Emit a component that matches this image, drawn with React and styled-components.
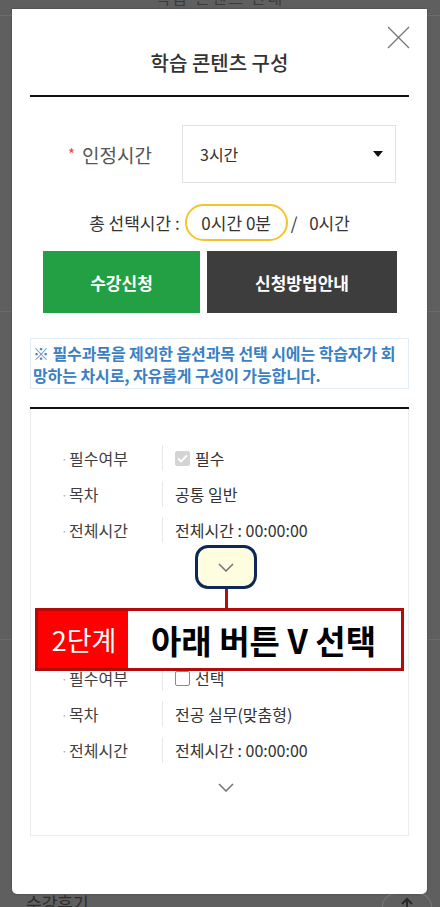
import React from "react";
import styled, { createGlobalStyle } from "styled-components";

const GlobalStyle = createGlobalStyle`
  html, body {
    margin: 0;
    padding: 0;
    background: #5f5f5f;
  }
  body {
    font-family: "Noto Sans CJK KR", "Noto Sans", sans-serif;
    color: #333;
  }
  * { box-sizing: border-box; }
`;

const Page = styled.div`
  position: relative;
  width: 440px;
  height: 907px;
  overflow: hidden;
  background: #5f5f5f;
  display: flex;
  flex-direction: column;
`;

const PageHeader = styled.div`
  height: 16px;
  border-bottom: 1px solid #6b6b6b;
  text-align: center;
  overflow: hidden;
`;

const PageHeaderText = styled.div`
  margin-top: -12px;
  font-size: 16px;
  line-height: 18px;
  color: #3a3a3a;
  letter-spacing: 2px;
`;

const PageBand = styled.div`
  height: ${(p) => p.h}px;
  border-bottom: 1px solid #6a6a6a;
`;

const PageFooter = styled.div`
  flex: 1;
  display: flex;
  align-items: flex-end;
  justify-content: space-between;
  padding: 0 8px 0 26px;
`;

const FooterText = styled.div`
  font-size: 17px;
  line-height: 16px;
  height: 12px;
  overflow: hidden;
  color: #2c2c2c;
`;

const TopButton = styled.div`
  width: 50px;
  height: 14px;
  border: 1px solid #777;
  border-bottom: none;
  border-radius: 25px 25px 0 0;
  display: flex;
  justify-content: center;
  padding-top: 3px;
  color: #2a2a2a;
`;

const Modal = styled.div`
  position: absolute;
  top: 9px;
  left: 12px;
  width: 415px;
  height: 885px;
  background: #fff;
  border-radius: 0 0 5px 5px;
  box-shadow: 0 0 2px rgba(0, 0, 0, 0.35);
  padding: 0 18px;
`;

const CloseButton = styled.button`
  position: absolute;
  top: 17px;
  right: 17px;
  width: 23px;
  height: 23px;
  padding: 0;
  border: none;
  background: none;
  color: #777;
  display: flex;
`;

const Header = styled.div`
  padding-top: 40px;
  padding-bottom: 18px;
  border-bottom: 2px solid #111;
  text-align: center;
`;

const Title = styled.h2`
  margin: 0;
  font-size: 20px;
  line-height: 28px;
  font-weight: 500;
  color: #333;
`;

const FieldRow = styled.div`
  margin-top: 28px;
  display: flex;
  align-items: center;
`;

const FieldLabel = styled.label`
  width: 122px;
  margin-right: 30px;
  text-align: right;
  font-size: 19px;
  color: #555;
`;

const Required = styled.span`
  color: #e0474c;
  font-size: 15px;
  margin-right: 7px;
  vertical-align: 3px;
`;

const Select = styled.div`
  width: 214px;
  height: 58px;
  border: 1px solid #e2e2e2;
  display: flex;
  align-items: center;
  justify-content: space-between;
  padding: 0 12px 0 17px;
  font-size: 16px;
  color: #333;
`;

const Caret = styled.span`
  width: 0;
  height: 0;
  border-left: 5.5px solid transparent;
  border-right: 5.5px solid transparent;
  border-top: 6px solid #111;
`;

const TotalRow = styled.div`
  margin-top: 21px;
  height: 37px;
  display: flex;
  align-items: center;
  justify-content: center;
  font-size: 17px;
  color: #333;
`;

const TimePill = styled.span`
  height: 37px;
  width: 103px;
  margin-left: 5px;
  border: 2px solid #f4c430;
  border-radius: 19px;
  display: inline-flex;
  align-items: center;
  justify-content: center;
`;

const Slash = styled.span`
  margin-left: 3px;
  word-spacing: 8px;
`;

const ButtonRow = styled.div`
  margin-top: 10px;
  padding: 0 12px 0 13px;
  display: flex;
  gap: 7px;
`;

const ActionButton = styled.button`
  width: ${(p) => p.w}px;
  height: 62px;
  border: none;
  background: ${(p) => p.bg};
  color: #fff;
  font-family: inherit;
  font-size: 17px;
  font-weight: 700;
`;

const Notice = styled.p`
  margin: 25px 0 0;
  padding: 3px 2px;
  height: 51px;
  border: 1px solid #e4edf5;
  color: #3b7fc4;
  font-size: 16px;
  font-weight: 700;
  line-height: 22px;
  white-space: nowrap;
  letter-spacing: -0.1px;
`;

const Divider = styled.hr`
  margin: 18px 0 0;
  border: none;
  border-top: 2px solid #111;
`;

const Panel = styled.div`
  position: relative;
  height: 427px;
  border: 1px solid #ececec;
  border-top: none;
  padding: 31px 0 0;
  display: flex;
  flex-direction: column;
  gap: 71px;
`;

const Item = styled.div`
  display: flex;
  flex-direction: column;
`;

const InfoRow = styled.div`
  height: 36px;
  display: flex;
  align-items: center;
  padding-left: 30px;
  font-size: 16px;
  color: #333;
`;

const InfoLabel = styled.div`
  width: 101px;
  display: flex;
  align-items: center;
  color: #3f3f3f;
  &::before {
    content: "·";
    color: #aaa;
    width: 8px;
    font-size: 12px;
  }
`;

const InfoValue = styled.div`
  height: 26px;
  border-left: 1px solid #e8e8e8;
  padding-left: 12px;
  display: flex;
  align-items: center;
  gap: 5px;
`;

const Check = styled.span`
  width: 15px;
  height: 15px;
  border-radius: 2px;
  border: 1px solid ${(p) => (p.checked ? "#d4d4d4" : "#8a8a8a")};
  background: ${(p) => (p.checked ? "#d4d4d4" : "#fff")};
  display: inline-flex;
  align-items: center;
  justify-content: center;
`;

const ExpandButton = styled.button`
  align-self: center;
  margin: -3px 0 0 12px;
  width: 62px;
  height: 44px;
  padding: 0;
  border: 3px solid ${(p) => (p.highlighted ? "#0d2759" : "transparent")};
  border-radius: 13px;
  background: ${(p) => (p.highlighted ? "#fffde0" : "transparent")};
  display: flex;
  align-items: center;
  justify-content: center;
  color: #777;
`;

const Connector = styled.div`
  position: absolute;
  top: 180px;
  left: 194px;
  width: 3px;
  height: 20px;
  background: #b50d0d;
`;

const Callout = styled.div`
  position: absolute;
  top: 199px;
  left: 4px;
  width: 369px;
  height: 63px;
  border: 3px solid #b40a0a;
  background: #fff;
  display: flex;
`;

const StepTag = styled.div`
  width: 90px;
  background: #ff0000;
  color: #fff;
  font-size: 27px;
  display: flex;
  align-items: center;
  justify-content: center;
  padding-left: 2px;
`;

const StepText = styled.div`
  flex: 1;
  display: flex;
  align-items: center;
  justify-content: center;
  padding-right: 2px;
  font-size: 33px;
  font-weight: 700;
  color: #000;
`;

const Chevron = () => (
  <svg width="16" height="9" viewBox="0 0 16 9" fill="none">
    <path d="M1 1l7 7 7-7" stroke="currentColor" strokeWidth="1.6" />
  </svg>
);

const CheckMark = () => (
  <svg width="11" height="9" viewBox="0 0 11 9" fill="none">
    <path d="M1 4.5l3 3 6-6" stroke="#fff" strokeWidth="1.8" />
  </svg>
);

const items = [
  { required: true, flag: "필수", toc: "공통 일반", time: "00:00:00" },
  { required: false, flag: "선택", toc: "전공 실무(맞춤형)", time: "00:00:00" },
];

const ContentItem = ({ data, highlighted }) => (
  <Item>
    <InfoRow>
      <InfoLabel>필수여부</InfoLabel>
      <InfoValue>
        <Check checked={data.required}>{data.required && <CheckMark />}</Check>
        {data.flag}
      </InfoValue>
    </InfoRow>
    <InfoRow>
      <InfoLabel>목차</InfoLabel>
      <InfoValue>{data.toc}</InfoValue>
    </InfoRow>
    <InfoRow>
      <InfoLabel>전체시간</InfoLabel>
      <InfoValue>전체시간 : {data.time}</InfoValue>
    </InfoRow>
    <ExpandButton highlighted={highlighted} aria-label="펼치기">
      <Chevron />
    </ExpandButton>
  </Item>
);

export default function App() {
  return (
    <>
      <GlobalStyle />
      <Page>
        <PageHeader>
          <PageHeaderText>학습 콘텐츠 안내</PageHeaderText>
        </PageHeader>
        <PageBand h={296} />
        <PageBand h={328} />
        <PageFooter>
          <FooterText>수강후기</FooterText>
          <TopButton>
            <svg width="14" height="12" viewBox="0 0 14 12" fill="none">
              <path d="M7 12V2M2 7l5-5 5 5" stroke="currentColor" strokeWidth="2" />
            </svg>
          </TopButton>
        </PageFooter>

        <Modal>
          <CloseButton aria-label="닫기">
            <svg width="23" height="23" viewBox="0 0 23 23" fill="none">
              <path d="M1 1l21 21M22 1L1 22" stroke="currentColor" strokeWidth="1.3" />
            </svg>
          </CloseButton>
          <Header>
            <Title>학습 콘텐츠 구성</Title>
          </Header>

          <FieldRow>
            <FieldLabel>
              <Required>*</Required>인정시간
            </FieldLabel>
            <Select>
              3시간
              <Caret />
            </Select>
          </FieldRow>

          <TotalRow>
            총 선택시간 :<TimePill>0시간 0분</TimePill>
            <Slash>/ 0시간</Slash>
          </TotalRow>

          <ButtonRow>
            <ActionButton w={157} bg="#22a043">수강신청</ActionButton>
            <ActionButton w={190} bg="#3d3d3d">신청방법안내</ActionButton>
          </ButtonRow>

          <Notice>
            ※ 필수과목을 제외한 옵션과목 선택 시에는 학습자가 회<br />
            망하는 차시로, 자유롭게 구성이 가능합니다.
          </Notice>

          <Divider />

          <Panel>
            {items.map((item, i) => (
              <ContentItem key={i} data={item} highlighted={i === 0} />
            ))}
            <Connector />
            <Callout>
              <StepTag>2단계</StepTag>
              <StepText>아래 버튼 V 선택</StepText>
            </Callout>
          </Panel>
        </Modal>
      </Page>
    </>
  );
}
